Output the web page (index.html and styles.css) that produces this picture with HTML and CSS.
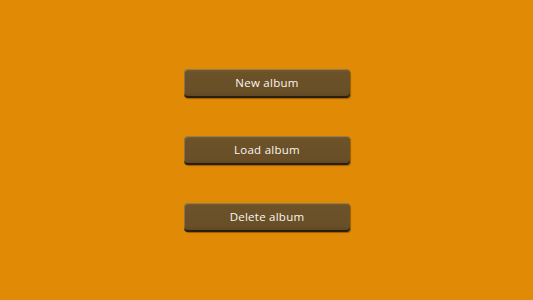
FILE: index.html
```html
<!DOCTYPE html>
<html>
<head>
<meta charset="utf-8">
<link rel="stylesheet" href="styles.css">
</head>
<body>
<main class="menu">
  <button class="btn">New album</button>
  <button class="btn">Load album</button>
  <button class="btn">Delete album</button>
</main>
</body>
</html>
```
FILE: styles.css
```css
html, body {
  margin: 0;
  padding: 0;
  height: 100%;
}
body {
  background: #e18a05;
  font-family: "Open Sans", "DejaVu Sans", sans-serif;
}
.menu {
  height: 100%;
  display: flex;
  flex-direction: column;
  align-items: center;
  justify-content: center;
  gap: 38px;
  padding-left: 1px;
  box-sizing: border-box;
}
.btn {
  width: 166px;
  height: 29px;
  border: none;
  border-radius: 4px;
  background: linear-gradient(#7a5d2f 0%, #6c5229 12%, #684f27 80%, #5a4422 100%);
  box-shadow: inset 1px 1px 0 rgba(255,235,190,0.22), inset 0 -2px 0 #2a1f0e, 1px 1px 1px rgba(60,30,0,0.4);
  color: #fbf6ee;
  font-family: "Open Sans", "DejaVu Sans", sans-serif;
  font-size: 11.5px;
  letter-spacing: 0.25px;
  padding: 0 0 1px 0;
  cursor: pointer;
}
```
